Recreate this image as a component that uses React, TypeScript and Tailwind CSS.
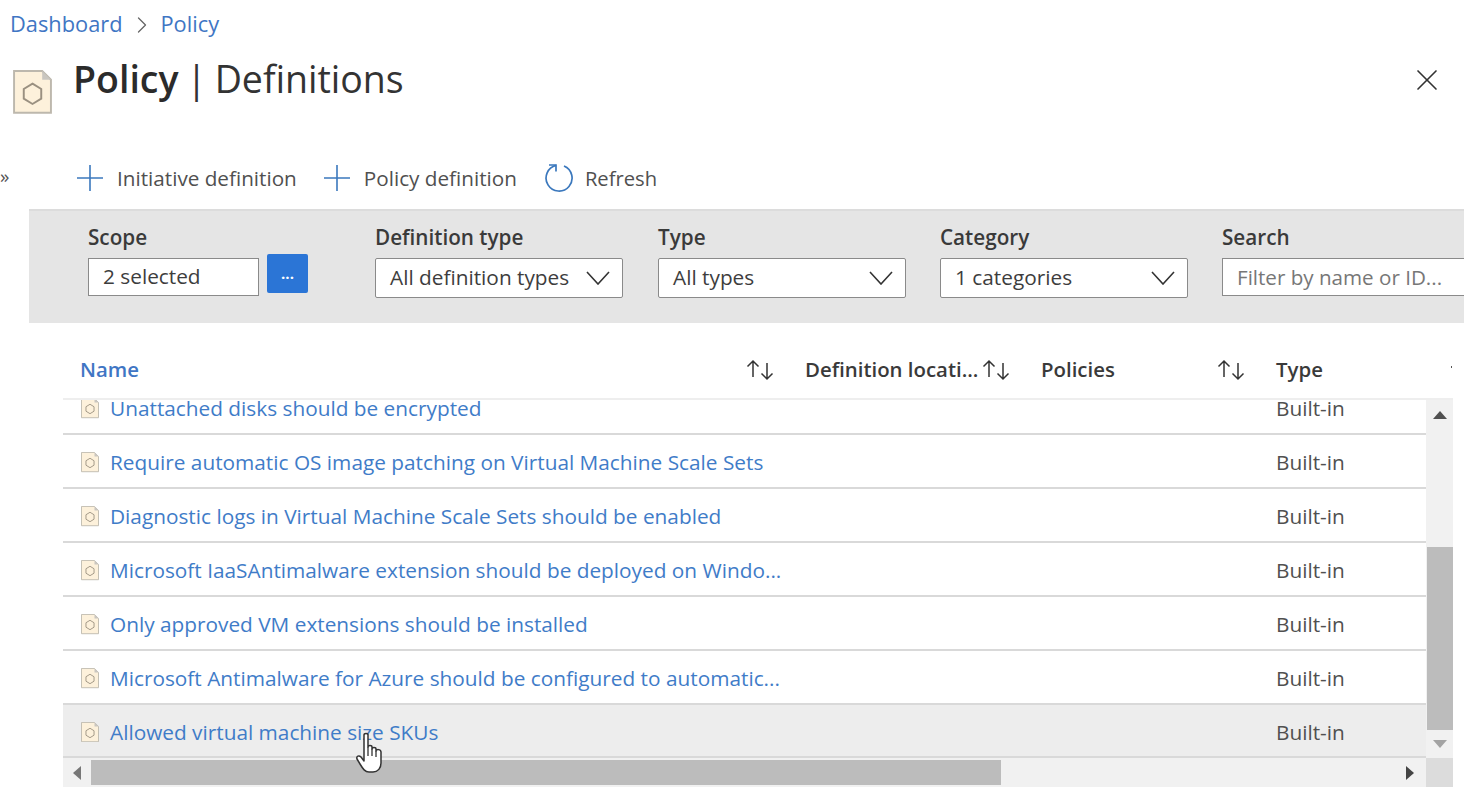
import { ChevronRight, X } from "lucide-react";

const rows = [
  "Unattached disks should be encrypted",
  "Require automatic OS image patching on Virtual Machine Scale Sets",
  "Diagnostic logs in Virtual Machine Scale Sets should be enabled",
  "Microsoft IaaSAntimalware extension should be deployed on Windo...",
  "Only approved VM extensions should be installed",
  "Microsoft Antimalware for Azure should be configured to automatic...",
  "Allowed virtual machine size SKUs",
];

function PolicyIcon({ size = 18 }: { size?: number }) {
  return (
    <svg width={size} height={size * 1.12} viewBox="0 0 40 45" className="shrink-0">
      <path d="M1 1H30L39 10V44H1Z" fill="#fdf1db" stroke="#bdb8ad" strokeWidth="2" />
      <path d="M30 1V10H39Z" fill="#c9c6c0" />
      <path d="M20 14L29 19.5V29.5L20 35L11 29.5V19.5Z" fill="none" stroke="#9a9080" strokeWidth="2" />
    </svg>
  );
}

function SortIcon() {
  return (
    <svg width="28" height="22" viewBox="0 0 28 22" fill="none" stroke="#333" strokeWidth="1.5" className="shrink-0">
      <path d="M7 18V2M1.5 7.5L7 2L12.5 7.5" />
      <path d="M21 4V20M15.5 14.5L21 20L26.5 14.5" />
    </svg>
  );
}

function PlusIcon() {
  return (
    <svg width="26" height="26" viewBox="0 0 26 26" fill="none" stroke="#3b78bd" strokeWidth="1.6" className="shrink-0">
      <path d="M13 0V26M0 13H26" />
    </svg>
  );
}

function Select({ value }: { value: string }) {
  return (
    <div className="flex h-10 w-[248px] items-center justify-between rounded-[2px] border border-[#8a8a8a] bg-white pl-[14px] pr-[12px] text-[20.8px] text-[#3d3d3d]">
      <span>{value}</span>
      <svg width="24" height="14" viewBox="0 0 24 14" fill="none" stroke="#333" strokeWidth="1.6" className="shrink-0">
        <path d="M1 1L12 13L23 1" />
      </svg>
    </div>
  );
}

function Filter({ label, width = "w-[282px]", children }: { label: string; width?: string; children: React.ReactNode }) {
  return (
    <div className={`${width} shrink-0`}>
      <div className="h-[37px] text-[20.7px] leading-[32px] font-semibold text-[#3a3a3a]">{label}</div>
      {children}
    </div>
  );
}

function ToolButton({ label }: { label: string }) {
  return (
    <div className="flex items-center gap-[14px]">
      <PlusIcon />
      <span className="text-[20.7px] text-[#505050]">{label}</span>
    </div>
  );
}

export default function App() {
  return (
    <div
      className="relative h-[803px] w-[1464px] overflow-hidden bg-white"
      style={{ fontFamily: '"Open Sans", "Noto Sans", sans-serif' }}
    >
      <nav className="flex h-[49px] items-center pl-[10px] text-[21.8px] text-[#3f76c4]">
        <span>Dashboard</span>
        <ChevronRight size={28} strokeWidth={1.1} className="mx-[5px] text-[#666]" />
        <span>Policy</span>
      </nav>

      <header className="flex h-[104px] items-start pl-[13px] pr-[19px]">
        <div className="pt-[21px]">
          <PolicyIcon size={39} />
        </div>
        <h1 className="ml-[21px] pt-[5px] text-[37.5px] leading-[50px] text-[#333]">
          <span className="font-semibold text-[#2b2b2b]">Policy</span>
          <span className="-mx-[2px]"> | </span>Definitions
        </h1>
        <X size={36} strokeWidth={1.1} className="ml-auto mt-[13px] text-[#333]" />
      </header>

      <div className="flex h-[56px] items-center pb-[5px]">
        <span className="-mt-[4px] w-[77px] text-[19px] leading-none text-[#555]">»</span>
        <div className="flex items-center">
          <ToolButton label="Initiative definition" />
          <div className="ml-[27px]">
            <ToolButton label="Policy definition" />
          </div>
          <div className="ml-[27px] flex items-center gap-[11px]">
            <svg width="30" height="30" viewBox="0 0 30 30" fill="none" stroke="#3b78bd" strokeWidth="1.7" className="shrink-0">
              <path d="M20 3A13 13 0 1 1 12 2.4" />
              <path d="M5 2H12V8.5" />
            </svg>
            <span className="text-[20.2px] text-[#505050]">Refresh</span>
          </div>
        </div>
      </div>

      <section className="ml-[29px] flex h-[114px] border-t-2 border-[#dcdcdc] bg-[#e5e5e5] pl-[59px] pt-[10px]">
        <Filter label="Scope" width="w-[287px]">
          <div className="flex items-start gap-[8px]">
            <div className="flex h-[38px] w-[171px] items-center border border-[#8a8a8a] bg-white pl-[14px] text-[20.8px] text-[#3d3d3d]">
              2 selected
            </div>
            <div className="-mt-[4px] flex h-[39px] w-[41px] items-center justify-center rounded-[2px] bg-[#2b75d6] text-[15px] font-bold text-white">
              ...
            </div>
          </div>
        </Filter>
        <Filter label="Definition type" width="w-[283px]">
          <Select value="All definition types" />
        </Filter>
        <Filter label="Type">
          <Select value="All types" />
        </Filter>
        <Filter label="Category">
          <Select value="1 categories" />
        </Filter>
        <Filter label="Search">
          <div className="flex h-[38px] w-[300px] items-center border border-[#8a8a8a] bg-white pl-[14px] text-[20.6px] text-[#777]">
            Filter by name or ID...
          </div>
        </Filter>
      </section>

      <div className="ml-[63px] w-[1390px]">
        <div className="mt-[22px] flex h-[55px] items-center border-b-2 border-[#eeeeee] pb-[4px] text-[20.4px] font-semibold text-[#3a3a3a]">
          <span className="ml-[17px] w-[666px] text-[#3f76c4]">Name</span>
          <SortIcon />
          <span className="ml-[31px] w-[177px] whitespace-nowrap">Definition locati...</span>
          <SortIcon />
          <span className="ml-[31px] w-[176px]">Policies</span>
          <SortIcon />
          <span className="ml-[31px]">Type</span>
          <span className="ml-auto mr-[1px] mb-[6px] h-[2px] w-[1px] bg-[#555]" />
        </div>

        <div className="flex h-[358px]">
          <div className="flex min-w-0 flex-1 flex-col justify-end overflow-hidden">
            {rows.map((row, i) => {
              const last = i === rows.length - 1;
              return (
                <div
                  key={row}
                  className={`flex shrink-0 items-center border-b-2 border-[#d9d9d9] pl-[18px] text-[20.8px] leading-[16px] ${
                    last ? "h-[53px] bg-[#ededed]" : "h-[54px] bg-white"
                  }`}
                >
                  <div className="mt-[3px]">
                    <PolicyIcon />
                  </div>
                  <span className="ml-[11px] mt-[2px] w-[1166px] whitespace-nowrap text-[#3f7cc8]">{row}</span>
                  <span className="mt-[2px] text-[#505050]">Built-in</span>
                </div>
              );
            })}
          </div>
          <div className="flex w-[27px] shrink-0 flex-col bg-[#f1f1f1]">
            <div className="flex h-[30px] items-center justify-center">
              <span className="border-x-[7px] border-b-[8px] border-x-transparent border-b-[#505050]" />
            </div>
            <div className="mt-[117px] ml-[1px] h-[183px] bg-[#bcbcbc]" />
            <div className="flex flex-1 items-center justify-center">
              <span className="border-x-[7px] border-t-[8px] border-x-transparent border-t-[#a3a3a3]" />
            </div>
          </div>
        </div>

        <div className="flex h-[29px]">
          <div className="flex w-[1363px] bg-[#f1f1f1] py-[2px]">
            <div className="flex w-[28px] items-center justify-center">
              <span className="border-y-[7px] border-r-[8px] border-y-transparent border-r-[#777]" />
            </div>
            <div className="w-[910px] bg-[#bcbcbc]" />
            <div className="flex flex-1 items-center justify-end pr-[12px]">
              <span className="border-y-[7px] border-l-[8px] border-y-transparent border-l-[#444]" />
            </div>
          </div>
          <div className="w-[27px] bg-[#dcdcdc]" />
        </div>
      </div>

      {/* mouse cursor over the last row */}
      <svg width="30" height="42" viewBox="0 0 30 42" className="absolute left-[355px] top-[732px]">
        <path
          d="M9 3C9 1 13 1 13 3V15C13 13 17 13 17 15V17C17 15 21 15 21 17V19C21 17 26 17 26 20V31C26 36 23 40 18 40H14C10 40 8 37 5 32L2 27C1 24 4 23 6 25L9 29Z"
          fill="#fff"
          stroke="#333"
          strokeWidth="1.5"
          strokeLinejoin="round"
        />
        <path d="M13 15V24M17 17V24M21 19V25" fill="none" stroke="#333" strokeWidth="1.3" />
      </svg>
    </div>
  );
}
